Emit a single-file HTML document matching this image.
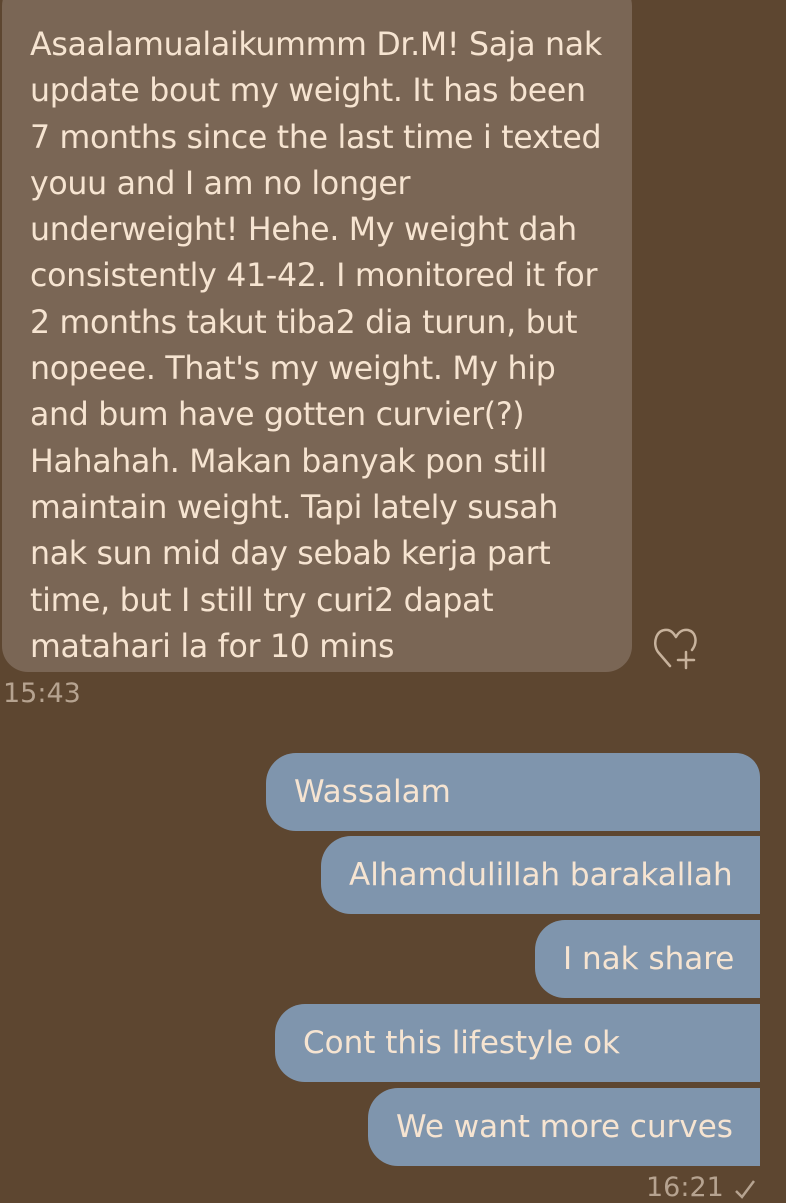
<!DOCTYPE html>
<html><head><meta charset="utf-8"><style>
html,body{margin:0;padding:0;}
body{width:786px;height:1200px;background:#5d4630;position:relative;overflow:hidden;font-family:"DejaVu Sans","Liberation Sans",sans-serif;color:#f6e4d1;}
.lb{position:absolute;left:2px;top:-20px;width:630px;height:692px;background:#7a6655;border-radius:26px;}
.lt{position:absolute;left:30px;top:22px;font-size:31.6px;line-height:46.3px;white-space:pre;letter-spacing:-0.3px;}
.rb{position:absolute;right:26px;height:78px;background:#7f95ad;border-radius:30px 0 0 30px;font-size:31px;line-height:78px;padding-left:28px;box-sizing:border-box;}
.ts{position:absolute;font-size:27px;color:#b6a390;}
</style></head><body>
<div class="lb"></div>
<div class="lt">Asaalamualaikummm Dr.M! Saja nak
update bout my weight. It has been
7 months since the last time i texted
youu and I am no longer
underweight! Hehe. My weight dah
consistently 41-42. I monitored it for
2 months takut tiba2 dia turun, but
nopeee. That's my weight. My hip
and bum have gotten curvier(?)
Hahahah. Makan banyak pon still
maintain weight. Tapi lately susah
nak sun mid day sebab kerja part
time, but I still try curi2 dapat
matahari la for 10 mins</div>
<svg style="position:absolute;left:652px;top:624px" width="54" height="46" viewBox="0 0 54 46"><path d="M18 42 L6 28 C0 20 4 4 16 6 C20 7 22 10 24 13 C26 9 30 5 36 6 C44 8 46 18 40 26" fill="none" stroke="#c7b29c" stroke-width="2.5" stroke-linecap="round" stroke-linejoin="round"/><path d="M34 28 V44 M26 36 H42" stroke="#c7b29c" stroke-width="2.5" stroke-linecap="round"/></svg>
<div class="ts" style="left:3px;top:678px;">15:43</div>
<div class="rb" style="top:753px;left:266px;border-top-right-radius:24px;">Wassalam</div>
<div class="rb" style="top:836px;left:321px;">Alhamdulillah barakallah</div>
<div class="rb" style="top:920px;left:535px;">I nak share</div>
<div class="rb" style="top:1004px;left:275px;">Cont this lifestyle ok</div>
<div class="rb" style="top:1088px;left:368px;">We want more curves</div>
<div class="ts" style="left:646px;top:1172px;">16:21</div>
<svg style="position:absolute;left:733px;top:1178px" width="24" height="22"><path d="M3 13 L9 19 L21 3" fill="none" stroke="#b6a390" stroke-width="2.5"/></svg>
</body></html>
